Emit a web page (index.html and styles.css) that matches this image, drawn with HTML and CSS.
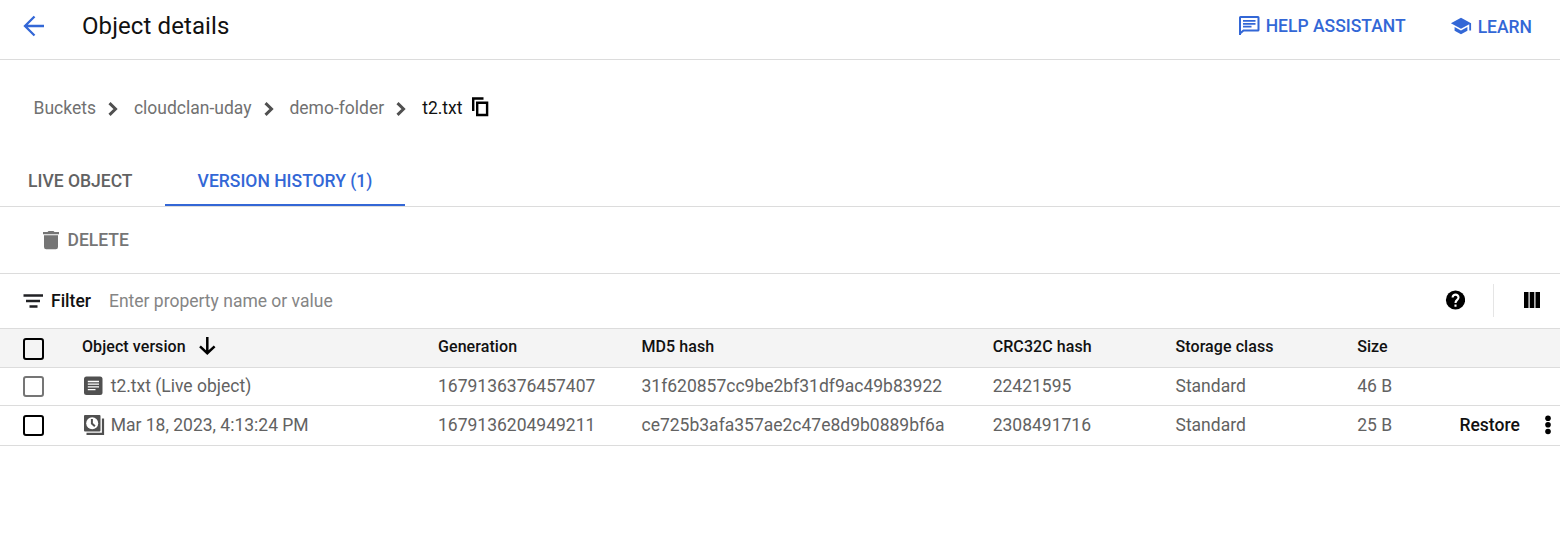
FILE: index.html
```html
<!DOCTYPE html>
<html lang="en">
<head>
<meta charset="utf-8">
<title>Object details</title>
<link rel="stylesheet" href="styles.css">
</head>
<body>
<header class="topbar">
  <svg class="back" width="24" height="22" viewBox="0 0 24 22"><path d="M22 11H3M12.500 1.500L3 11l9.500 9.500" fill="none" stroke="currentColor" stroke-width="2.300"/></svg>
  <h1 class="title">Object details</h1>
  <a class="action help"><svg width="22" height="22" viewBox="0 0 22 22"><path d="M2 20V2.500Q2 2 2.500 2H20Q20.500 2 20.500 2.500V15Q20.500 15.500 20 15.500H5.500L2 18.500" fill="none" stroke="currentColor" stroke-width="2"/><path d="M5 5.800h12.500M5 8.800h12.500M5 11.700h8.500" stroke="currentColor" stroke-width="1.700"/></svg><span>HELP ASSISTANT</span></a>
  <a class="action learn"><svg width="22" height="22" viewBox="0 0 24 24"><path fill="currentColor" d="M5 13.180v4L12 21l7-3.820v-4L12 17l-7-3.820zM12 3L1 9l11 6 9-4.910V17h2V9L12 3z"/></svg><span>LEARN</span></a>
</header>
<nav class="crumbs">
  <a class="crumb">Buckets</a>
  <svg class="chev" width="10" height="14" viewBox="0 0 10 14"><path d="M1.500 1.200L7.500 7l-6 5.800"/></svg>
  <a class="crumb">cloudclan-uday</a>
  <svg class="chev" width="10" height="14" viewBox="0 0 10 14"><path d="M1.500 1.200L7.500 7l-6 5.800"/></svg>
  <a class="crumb">demo-folder</a>
  <svg class="chev" width="10" height="14" viewBox="0 0 10 14"><path d="M1.500 1.200L7.500 7l-6 5.800"/></svg>
  <span class="crumb current">t2.txt</span>
  <svg class="copy" width="18" height="20" viewBox="0 0 18 20"><path d="M1.200 14V1.500H11.500M5.200 5.800h9.900v12.200H5.200z" fill="none" stroke="#000" stroke-width="2.400"/></svg>
</nav>
<div class="tabs">
  <a class="tab">LIVE OBJECT</a>
  <a class="tab active">VERSION HISTORY (1)</a>
</div>
<div class="toolbar">
  <svg width="18" height="20" viewBox="0 0 18 20"><path fill="currentColor" d="M1 2h4.500l1-1h5l1 1H17v2.200H1zM2 5.300h14V17q0 2.200-2.200 2.200H4.200Q2 19.200 2 17z"/></svg>
  <span>DELETE</span>
</div>
<div class="filter">
  <svg class="funnel" width="21" height="16" viewBox="0 0 21 16"><path d="M.5 1.500h19.500M3 7h14M6.500 12.500h8" stroke="#202124" stroke-width="2.400"/></svg>
  <span class="filter-label">Filter</span>
  <span class="placeholder">Enter property name or value</span>
  <svg class="question" width="20" height="20" viewBox="0 0 20 20"><circle cx="10.500" cy="10" r="9.600"/><path d="M7.600 7.600c0-4 5.900-4 5.900 0 0 2.300-3 2.300-3 5.300M10.500 14.400v2.300" fill="none" stroke="#fff" stroke-width="2.100"/></svg>
  <i class="divider"></i>
  <svg class="columns" width="16" height="16" viewBox="0 0 16 16"><path d="M0 0h4.500v16H0zM5.700 0h4.600v16H5.700zM11.500 0H16v16h-4.500z"/></svg>
</div>
<div class="table">
  <div class="row head">
    <i class="box"></i>
    <div class="name"><span>Object version</span><svg class="sort" width="18" height="20" viewBox="0 0 18 20"><path d="M9.300 1v16M2 10.300L9.300 17.200l7.300-6.900" fill="none" stroke="#000" stroke-width="2.500"/></svg></div>
    <span>Generation</span><span>MD5 hash</span><span>CRC32C hash</span><span>Storage class</span><span>Size</span>
  </div>
  <div class="row live-row">
    <i class="box muted"></i>
    <div class="name"><svg class="type" width="22" height="22" viewBox="0 0 22 22"><rect x="1" y="1.500" width="18.500" height="18.500" rx="2.500" fill="#505050"/><path d="M4.800 6.500h11.200M4.800 9.200h11.200M4.800 11.900h11.200M4.800 14.600h7.700" stroke="#fff" stroke-width="1.300"/></svg><span>t2.txt (Live object)</span></div>
    <span>1679136376457407</span><span>31f620857cc9be2bf31df9ac49b83922</span><span>22421595</span><span>Standard</span><span>46 B</span>
  </div>
  <div class="row old-row">
    <i class="box"></i>
    <div class="name"><svg class="type" width="22" height="22" viewBox="0 0 22 22"><rect x="1" y="1" width="16.500" height="16.500" rx="1" fill="#505050"/><path d="M20 4.500v15.400H3.500" fill="none" stroke="#505050" stroke-width="2.200"/><circle cx="9.200" cy="9.200" r="6" fill="#fff"/><path d="M8.900 5v4.500l3 2.700" fill="none" stroke="#505050" stroke-width="2"/></svg><span>Mar 18, 2023, 4:13:24 PM</span></div>
    <span>1679136204949211</span><span>ce725b3afa357ae2c47e8d9b0889bf6a</span><span>2308491716</span><span>Standard</span><span>25 B</span><a class="restore">Restore</a>
    <svg class="more" width="6" height="20" viewBox="0 0 6 20"><circle cx="3" cy="3.200" r="2.800"/><circle cx="3" cy="9.800" r="2.800"/><circle cx="3" cy="16.500" r="2.800"/></svg>
  </div>
</div>
</body>
</html>
```
FILE: styles.css
```css
* { box-sizing: border-box; }
body { margin: 0; background: #fff; color: #626262; font: 400 17.5px/24px Roboto, "Liberation Sans", sans-serif; overflow: hidden; white-space: nowrap; }
svg { display: block; flex: none; }
.topbar { height: 60px; border-bottom: 1px solid #dcdcdc; display: flex; align-items: flex-start; padding: 14px 28px 0 22px; color: #3367d6; }
.back { margin-top: 1px; }
.title { margin: 0 auto 0 36px; font-size: 24px; font-weight: 400; line-height: 24px; letter-spacing: .1px; color: #111; }
.action { display: flex; gap: 6px; font-weight: 500; }
.learn { margin: 1px 0 0 44px; }
.help svg { margin-top: 1px; }
.crumbs { height: 96px; padding: 36px 0 0 33.5px; display: flex; align-items: flex-start; color: #717171; }
.chev { margin: 6px 15.8px 0 12.2px; fill: none; stroke: #505050; stroke-width: 3; }
.current { color: #111; }
.copy { margin: 1px 0 0 10px; }
.tabs { height: 51px; border-bottom: 1px solid #dcdcdc; display: flex; font-weight: 500; }
.tab { width: 165px; height: 50px; padding: 13px 0 0 28px; }
.tab.active { width: 240px; padding: 13px 0 0; text-align: center; color: #3367d6; border-bottom: 2px solid #3367d6; }
.toolbar { height: 67px; border-bottom: 1px solid #dcdcdc; display: flex; padding: 21px 0 0 42px; gap: 7.5px; color: #757575; font-weight: 500; }
.toolbar svg { margin-top: 1.5px; }
.filter { height: 54px; display: flex; padding: 15px 20px 0 23px; }
.funnel { margin: 5px 7px 0 0; }
.filter-label { color: #111; font-weight: 500; }
.placeholder { margin: 0 auto 0 18px; color: #858585; }
.question { margin: 1px 28px 0 0; }
.divider { width: 1px; height: 33px; margin: -5px 30px 0 0; background: #e5e5e5; }
.columns { margin-top: 3px; }
.row { display: grid; grid-template-columns: 82px 356px 203.5px 351.2px 182.8px 181.7px 102.3px 84px 1fr; height: 39px; border-bottom: 1px solid #dcdcdc; align-items: start; padding-top: 6px; }
.head { height: 40px; border-top: 1px solid #dcdcdc; background: #f4f4f4; color: #111; font-size: 16px; font-weight: 500; letter-spacing: .08px; padding-top: 6px; }
.live-row { height: 38px; }
.old-row { height: 40px; padding-top: 7px; }
.box { width: 21px; height: 21px; margin: 2px 0 0 23px; border: 2px solid #000; border-radius: 3px; background: #fff; }
.head .box { margin-top: 3px; height: 22px; background: transparent; }
.box.muted { border-color: #757575; }
.name { display: flex; }
.sort { margin: 1px 0 0 12px; }
.type { margin: 1px 5.4px 0 1.3px; }
.restore { color: #111; font-weight: 500; }
.more { margin: 2px 0 0 2px; }
```
